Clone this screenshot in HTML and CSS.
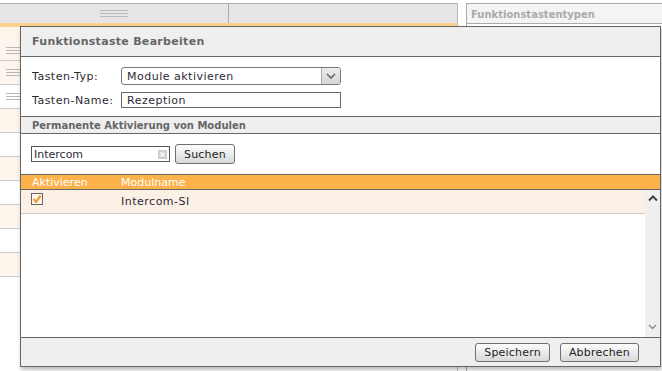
FILE: index.html
```html
<!DOCTYPE html>
<html lang="de">
<head>
  <meta charset="UTF-8">
  <title>Funktionstaste Bearbeiten</title>
  <link rel="stylesheet" href="styles.css">
</head>
<body>
  <div class="page">
    <div class="grid">
      <div class="grid-head">
        <div class="grid-col"><span class="grip wide"></span></div>
        <div class="grid-col"></div>
      </div>
      <div class="grid-band"></div>
      <div class="grid-row pale first"><span class="grip"></span></div>
      <div class="grid-row pale"><span class="grip"></span></div>
      <div class="grid-row"><span class="grip"></span></div>
      <div class="grid-row pale"></div>
      <div class="grid-row"></div>
      <div class="grid-row pale"></div>
      <div class="grid-row"></div>
      <div class="grid-row pale"></div>
      <div class="grid-row"></div>
      <div class="grid-row pale"></div>
    </div>
    <div class="types">
      <div class="types-head">Funktionstastentypen</div>
    </div>
  </div>

  <div class="dialog">
    <div class="dialog-head">Funktionstaste Bearbeiten</div>

    <div class="form">
      <label>Tasten-Typ:</label>
      <div class="select">
        <span>Module aktivieren</span>
        <span class="select-arrow">
          <svg width="10" height="6" viewBox="0 0 10 6"><path d="M1 1 L5 5 L9 1" fill="none" stroke="#666" stroke-width="1.6"/></svg>
        </span>
      </div>
      <label>Tasten-Name:</label>
      <div class="text-input">Rezeption</div>
    </div>

    <div class="section-head">Permanente Aktivierung von Modulen</div>

    <div class="search">
      <div class="search-input">
        <span>Intercom</span>
        <span class="clear">
          <svg width="9" height="9" viewBox="0 0 9 9"><rect width="9" height="9" fill="#cfcfcf"/><path d="M2.5 2.5 L6.5 6.5 M6.5 2.5 L2.5 6.5" stroke="#fff" stroke-width="1.3"/></svg>
        </span>
      </div>
      <button class="btn">Suchen</button>
    </div>

    <div class="list-head">
      <span class="col-check">Aktivieren</span>
      <span>Modulname</span>
    </div>

    <div class="list">
      <div class="list-rows">
        <div class="list-row">
          <span class="col-check">
            <span class="checkbox">
              <svg width="10" height="10" viewBox="0 0 10 10"><path d="M1.5 5 L4 7.8 L8.8 1.5" fill="none" stroke="#f39a36" stroke-width="2.2"/></svg>
            </span>
          </span>
          <span>Intercom-SI</span>
        </div>
      </div>
      <div class="scrollbar">
        <svg width="10" height="7" viewBox="0 0 10 7"><path d="M1 5.5 L5 1.5 L9 5.5" fill="none" stroke="#444" stroke-width="2"/></svg>
        <svg width="9" height="6" viewBox="0 0 9 6"><path d="M1 1 L4.5 4.5 L8 1" fill="none" stroke="#8a8a8a" stroke-width="1.4"/></svg>
      </div>
    </div>

    <div class="dialog-foot">
      <button class="btn">Speichern</button>
      <button class="btn">Abbrechen</button>
    </div>
  </div>
</body>
</html>
```

FILE: styles.css
```css
body {
  margin: 0;
  font-family: 'DejaVu Sans', Verdana, sans-serif;
  font-size: 11px;
  letter-spacing: 0.5px;
  color: #2e2a35;
  background: #fff;
  height: 371px;
  overflow: hidden;
}

.page {
  display: flex;
  padding-top: 3px;
}

/* background table */
.grid {
  width: 458px;
  border-right: 1px solid #bbb;
  box-sizing: border-box;
  height: 368px;
}

.grid-head {
  display: flex;
  height: 19px;
  border-top: 1px solid #aaa;
  background: #e6e6e6;
}

.grid-col {
  flex: 1;
  display: flex;
  align-items: center;
  justify-content: center;
}

.grid-col + .grid-col {
  border-left: 1px solid #aaa;
}

.grid-band {
  height: 4px;
  background: #fdd08c;
}

.grid-row {
  height: 23px;
  border-bottom: 1px solid #ccc;
  display: flex;
  align-items: center;
  padding-left: 6px;
}

.grid-row.first {
  box-sizing: border-box;
  height: 34px;
  padding-top: 13px;
}

.grid-row.pale {
  background: #fdf4ec;
}

.grip {
  display: block;
  width: 14px;
  height: 7px;
  background: repeating-linear-gradient(#b8b8b8 0 1px, transparent 1px 3px);
}

.grip.wide {
  width: 28px;
}

.types {
  margin-left: 8px;
  flex: 1;
  border-left: 1px solid #aaa;
  border-top: 1px solid #aaa;
  height: 368px;
}

.types-head {
  height: 19px;
  line-height: 21px;
  padding-left: 4px;
  background: #f4f4f4;
  border-bottom: 1px solid #aaa;
  color: #aaa;
  font-weight: bold;
  font-size: 10px;
  letter-spacing: 0;
}

/* dialog */
.dialog {
  position: absolute;
  left: 20px;
  top: 26px;
  width: 641px;
  height: 341px;
  box-sizing: border-box;
  border: 1px solid #666;
  background: #fff;
  display: flex;
  flex-direction: column;
  box-shadow: 1px 3px 4px rgba(0,0,0,0.25);
}

.dialog-head {
  height: 29px;
  line-height: 30px;
  padding-left: 11px;
  background: #efefef;
  border-bottom: 1px solid #666;
  color: #666;
  font-weight: bold;
  letter-spacing: 0.3px;
}

.form {
  height: 59px;
  box-sizing: border-box;
  padding: 10px 0 0 11px;
  display: grid;
  grid-template-columns: 89px 220px;
  grid-template-rows: 18px 16px;
  row-gap: 7px;
  align-items: center;
}

.select {
  height: 18px;
  box-sizing: border-box;
  border: 1px solid #777;
  border-radius: 3px;
  display: flex;
  align-items: center;
  justify-content: space-between;
  padding-left: 5px;
  overflow: hidden;
}

.select-arrow {
  width: 18px;
  height: 16px;
  background: linear-gradient(#ececec, #d6d6d6);
  border-left: 1px solid #aaa;
  display: flex;
  align-items: center;
  justify-content: center;
}

.text-input {
  height: 16px;
  line-height: 15px;
  box-sizing: border-box;
  border: 1px solid #666;
  padding-left: 5px;
}

.section-head {
  height: 16px;
  line-height: 17px;
  padding-left: 11px;
  background: #efefef;
  border-top: 1px solid #666;
  border-bottom: 1px solid #666;
  color: #666;
  font-weight: bold;
  font-size: 10px;
  letter-spacing: 0;
}

.search {
  height: 40px;
  display: flex;
  align-items: center;
  gap: 5px;
  padding-left: 10px;
}

.search-input {
  width: 139px;
  height: 16px;
  box-sizing: border-box;
  border: 1px solid #555;
  padding: 0 2px;
  display: flex;
  align-items: center;
  justify-content: space-between;
  letter-spacing: 0;
}

.clear {
  display: flex;
}

.btn {
  font-family: 'DejaVu Sans', Verdana, sans-serif;
  font-size: 11px;
  letter-spacing: 0.2px;
  color: #222;
  height: 20px;
  padding: 0 8px;
  border: 1px solid #707070;
  border-radius: 3px;
  background: linear-gradient(#fdfdfd, #d9d9d9);
}

.list-head {
  height: 14px;
  line-height: 15px;
  display: flex;
  background: #fdb14a;
  border-top: 1px solid #666;
  border-bottom: 1px solid #666;
  color: #fff;
  padding-left: 11px;
  letter-spacing: 0;
}

.list-head .col-check {
  width: 89px;
}

.col-check {
  width: 90px;
  display: flex;
}

.list {
  flex: 1;
  display: flex;
}

.list-rows {
  flex: 1;
}

.list-row {
  height: 23px;
  display: flex;
  align-items: center;
  padding-left: 10px;
  background: #fbf0e5;
  border-bottom: 1px solid #ccc;
}

.checkbox {
  width: 12px;
  height: 12px;
  box-sizing: border-box;
  border: 1px solid #666;
  background: #fdf6ee;
  display: flex;
  align-items: center;
  justify-content: center;
  margin-top: -5px;
}

.scrollbar {
  width: 15px;
  background: #efefef;
  display: flex;
  flex-direction: column;
  justify-content: space-between;
  align-items: center;
  padding: 5px 0 7px;
  box-sizing: border-box;
}

.dialog-foot {
  height: 28px;
  border-top: 1px solid #666;
  background: #efefef;
  display: flex;
  align-items: center;
  justify-content: flex-end;
  gap: 10px;
  padding-right: 21px;
}

.dialog-foot .btn {
  height: 19px;
}
```
